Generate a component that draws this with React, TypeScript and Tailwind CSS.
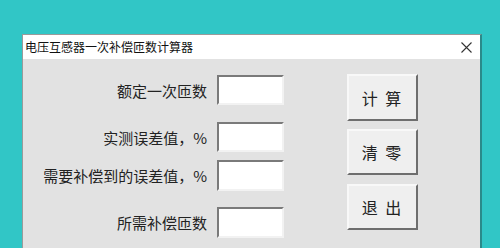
import React from "react";

const rows = [
  { label: "额定一次匝数", mt: "mt-[16px]", h: "h-[30px]" },
  { label: "实测误差值，%", mt: "mt-[17px]", h: "h-[30px]" },
  { label: "需要补偿到的误差值，%", mt: "mt-[8px]", h: "h-[31px]" },
  { label: "所需补偿匝数", mt: "mt-[16px]", h: "h-[31px]" },
];

const buttons = [
  { text: "计 算", mt: "mt-[15px]", h: "h-[47px]" },
  { text: "清 零", mt: "mt-[8px]", h: "h-[46px]" },
  { text: "退 出", mt: "mt-[9px]", h: "h-[46px]" },
];

export default function App() {
  return (
    <div
      className="w-[500px] h-[248px] overflow-hidden bg-[#31c6c6] pt-[34px] pl-[22px]"
      style={{ fontFamily: '"Noto Sans CJK SC", "Noto Sans", sans-serif' }}
    >
      <div className="w-[460px] h-[214px] flex flex-col border-l border-t border-[#9a9a9a] border-r-2 border-r-[#2a8a8a] bg-[#e2e2e2]">
        {/* Title bar */}
        <div className="h-[24px] bg-white flex items-center justify-between pl-[2px] pr-[8px] shrink-0">
          <span className="text-[12px] leading-none text-[#111]">电压互感器一次补偿匝数计算器</span>
          <svg width="11" height="11" viewBox="0 0 11 11" className="text-[#333]">
            <path d="M0.5 0.5 L10.5 10.5 M10.5 0.5 L0.5 10.5" stroke="currentColor" strokeWidth="1.1" />
          </svg>
        </div>

        {/* Body */}
        <div className="flex flex-1">
          <div className="flex flex-col">
            {rows.map((r) => (
              <div key={r.label} className={`flex items-center ${r.mt} ${r.h}`}>
                <span className="w-[184px] text-right text-[15px] leading-none text-[#222]">{r.label}</span>
                <div className={`ml-[10px] w-[67px] ${r.h} bg-white border-2 border-t-[#7a7a7a] border-l-[#7a7a7a] border-r-[#f2f2f2] border-b-[#f2f2f2]`} />
              </div>
            ))}
          </div>
          <div className="flex flex-col ml-[63px]">
            {buttons.map((b) => (
              <div
                key={b.text}
                className={`${b.mt} ${b.h} w-[71px] flex items-center justify-center bg-[#efefef] border-2 border-t-[#f8f8f8] border-l-[#f8f8f8] border-r-[#6e6e6e] border-b-[#6e6e6e] text-[16px] leading-none text-[#222] tracking-[2px]`}
              >
                {b.text}
              </div>
            ))}
          </div>
        </div>
      </div>
    </div>
  );
}
